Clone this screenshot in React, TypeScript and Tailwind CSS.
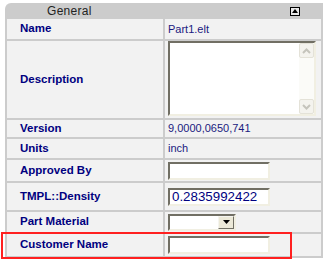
import { ReactNode } from "react";

const font = { fontFamily: '"Liberation Sans", Arial, sans-serif' };

function Label({ children }: { children: ReactNode }) {
  return <span className="pl-[13px] text-[11.5px] font-bold text-[#000080]">{children}</span>;
}

function Value({ children }: { children: ReactNode }) {
  return <span className="text-[11px] text-[#1a1a80]">{children}</span>;
}

function TextInput({ value = "" }: { value?: string }) {
  return (
    <div className="flex h-[18px] w-[102px] items-center border-2 border-t-[#716f64] border-l-[#716f64] border-b-[#f1efe2] border-r-[#f1efe2] bg-white pl-[2px] text-[13.33px] leading-none text-[#000080]">
      {value}
    </div>
  );
}

function Chevron({ up }: { up?: boolean }) {
  return (
    <svg width="9" height="6" viewBox="0 0 9 6">
      <path d={up ? "M1 5 L4.5 1.5 L8 5" : "M1 1 L4.5 4.5 L8 1"} stroke="#c5c4bc" strokeWidth="2" fill="none" />
    </svg>
  );
}

function Row({ h, label, children }: { h: string; label: string; children?: ReactNode }) {
  return (
    <>
      <div className={`flex items-center bg-[#f2f2f2] ${h}`}>
        <Label>{label}</Label>
      </div>
      <div className={`flex items-center bg-[#f2f2f2] pl-[3px] ${h}`}>{children}</div>
    </>
  );
}

export default function App() {
  return (
    <div className="relative h-[264px] w-[328px] bg-white" style={font}>
      <div className="pt-[3px] pl-[5px]">
        <div className="flex h-[16px] w-[318px] items-center justify-between rounded-tl-[6px] bg-[#cccccc] pl-[42px] pr-[23px]">
          <span className="text-[12px] leading-none tracking-[0.3px] text-[#222]">General</span>
          <div className="flex h-[9px] w-[10px] items-center justify-center border border-black bg-[#e8e8e8]">
            <svg width="6" height="4" viewBox="0 0 6 4">
              <path d="M0 4 L3 0 L6 4 Z" fill="#000" />
            </svg>
          </div>
        </div>
        <div className="grid w-[318px] grid-cols-[156px_156px] gap-[2px] bg-[#cccccc] px-[2px] pb-[2px]">
          <Row h="h-[20px]" label="Name">
            <Value>Part1.elt</Value>
          </Row>
          <div className="flex h-[77px] items-center bg-[#f2f2f2]">
            <Label>Description</Label>
          </div>
          <div className="flex h-[77px] items-start bg-[#f2f2f2] pl-[3px]">
            <div className="flex h-[75px] w-[148px] border-2 border-t-[#716f64] border-l-[#716f64] border-b-[#f1efe2] border-r-[#f1efe2] bg-white">
              <div className="flex-1" />
              <div className="flex w-[15px] flex-col justify-between bg-[#fbfbf8]">
                <div className="flex h-[15px] items-center justify-center rounded-[2px] border border-[#e4e2d8] bg-[#f4f3ee]">
                  <Chevron up />
                </div>
                <div className="flex h-[15px] items-center justify-center rounded-[2px] border border-[#e4e2d8] bg-[#f4f3ee]">
                  <Chevron />
                </div>
              </div>
            </div>
          </div>
          <Row h="h-[17px]" label="Version">
            <Value>9,0000,0650,741</Value>
          </Row>
          <Row h="h-[19px]" label="Units">
            <Value>inch</Value>
          </Row>
          <Row h="h-[21px]" label="Approved By">
            <TextInput />
          </Row>
          <Row h="h-[27px]" label="TMPL::Density">
            <TextInput value="0.2835992422" />
          </Row>
          <Row h="h-[20px]" label="Part Material">
            <div className="flex h-[17px] w-[68px] border-2 border-t-[#716f64] border-l-[#716f64] border-b-[#f1efe2] border-r-[#f1efe2] bg-white">
              <div className="flex-1" />
              <div className="flex w-[16px] items-center justify-center border border-t-[#f5f4ef] border-l-[#f5f4ef] border-b-[#716f64] border-r-[#716f64] bg-[#ece9d8]">
                <svg width="7" height="4" viewBox="0 0 7 4">
                  <path d="M0 0 L7 0 L3.5 4 Z" fill="#000" />
                </svg>
              </div>
            </div>
          </Row>
          <Row h="h-[22px]" label="Customer Name">
            <TextInput />
          </Row>
        </div>
      </div>
      <div className="absolute left-[1px] top-[232px] h-[27px] w-[291px] border-2 border-[#ff2020]" />
    </div>
  );
}
